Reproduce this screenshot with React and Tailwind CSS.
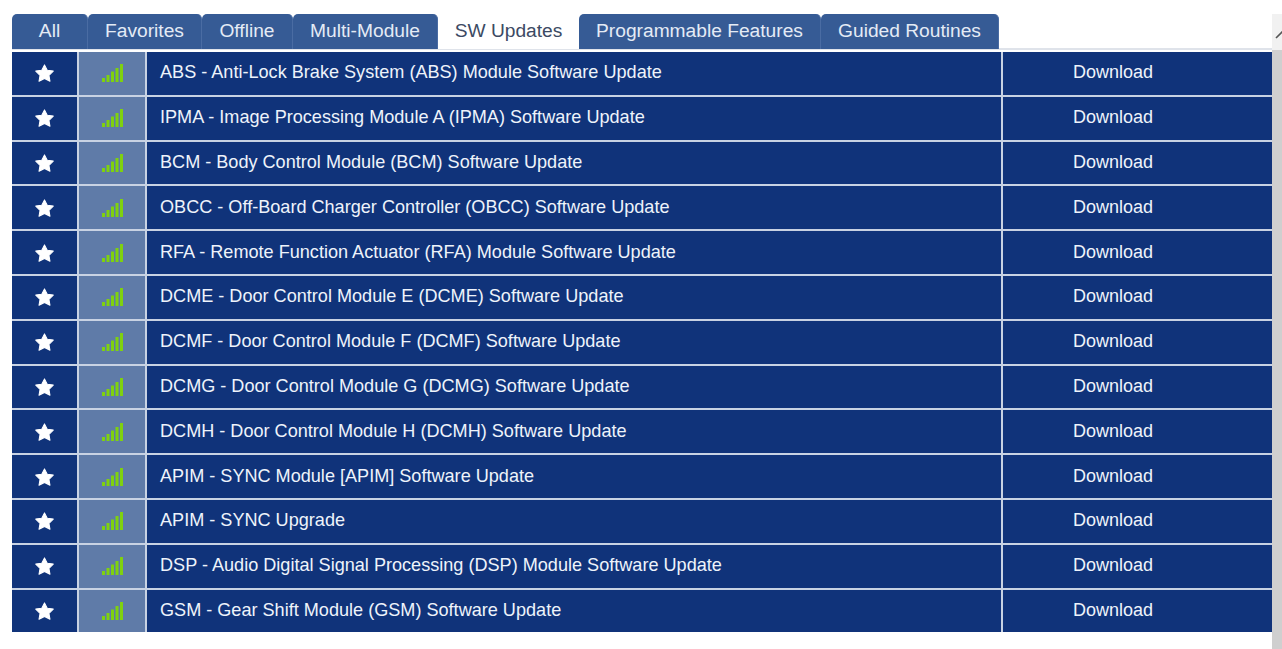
import React from 'react';

const tabs = [
  { label: 'All', width: 'w-[76px]' },
  { label: 'Favorites', width: 'w-[114px]' },
  { label: 'Offline', width: 'w-[91px]' },
  { label: 'Multi-Module', width: 'w-[145px]' },
  { label: 'SW Updates', width: 'w-[141px]', active: true },
  { label: 'Programmable Features', width: 'w-[242px]' },
  { label: 'Guided Routines', width: 'w-[178px]' },
];

const modules = [
  'ABS - Anti-Lock Brake System (ABS) Module Software Update',
  'IPMA - Image Processing Module A (IPMA) Software Update',
  'BCM - Body Control Module (BCM) Software Update',
  'OBCC - Off-Board Charger Controller (OBCC) Software Update',
  'RFA - Remote Function Actuator (RFA) Module Software Update',
  'DCME - Door Control Module E (DCME) Software Update',
  'DCMF - Door Control Module F (DCMF) Software Update',
  'DCMG - Door Control Module G (DCMG) Software Update',
  'DCMH - Door Control Module H (DCMH) Software Update',
  'APIM - SYNC Module [APIM] Software Update',
  'APIM - SYNC Upgrade',
  'DSP - Audio Digital Signal Processing (DSP) Module Software Update',
  'GSM - Gear Shift Module (GSM) Software Update',
];

const Star = () => (
  <svg width="19" height="18" viewBox="0 0 18 17" fill="#fff">
    <path d="M9 .8l2.6 5 5.7.9-4.1 4 1 5.6L9 13.7l-5.2 2.6 1-5.6-4.1-4 5.7-.9z" stroke="#fff" strokeWidth="1" strokeLinejoin="round" />
  </svg>
);

const Signal = () => (
  <svg width="21" height="18" viewBox="0 0 21 18" fill="#7fd10f">
    <rect x="0" y="14" width="3" height="4" />
    <rect x="4.5" y="11" width="3" height="7" />
    <rect x="9" y="7.5" width="3" height="10.5" />
    <rect x="13.5" y="4" width="3" height="14" />
    <rect x="18" y="0" width="3" height="18" />
  </svg>
);

const Row = ({ name }) => (
  <div className="flex h-[42.8px] gap-[2px]">
    <div className="flex w-[65px] items-center justify-center bg-[#10337a]"><Star /></div>
    <div className="flex w-[66px] items-center justify-center bg-[#5f7ba8]"><Signal /></div>
    <div className="flex w-[854px] items-center bg-[#10337a] pb-[2px] pl-[13px] text-[#eef3fb]">{name}</div>
    <div className="flex flex-1 items-center justify-center bg-[#10337a] pb-[2px] pr-[49px] text-[18px] text-[#eef3fb]">Download</div>
  </div>
);

export default function App() {
  return (
    <div className="flex h-[649px] w-[1282px] overflow-hidden bg-white font-['Liberation_Sans',Arial,sans-serif] text-[18.1px] leading-none">
      <div className="flex w-[1272px] flex-col pl-[12px] pt-[14px]">
        <div className="flex h-[36px] border-b-2 border-[#dfe3ea]">
          {tabs.map((tab) => (
            <div
              key={tab.label}
              className={`flex h-[35px] ${tab.width} items-center justify-center rounded-t-[5px] pb-[2px] text-[19.2px] ${
                tab.active ? 'bg-white text-[#3c4a63]' : 'border-r border-[#4a6ca3] bg-[#365b95] text-[#e4ebf5]'
              }`}
            >
              {tab.label}
            </div>
          ))}
        </div>
        <div className="mt-[2px] flex flex-col gap-[2px] bg-[#c8d2e3]">
          {modules.map((name) => (
            <Row key={name} name={name} />
          ))}
        </div>
      </div>
      <div className="mt-[14px] flex w-[10px] flex-col overflow-hidden bg-[#cfcfcf]">
        <div className="flex h-[36px] items-center justify-start bg-[#f1f1f1] pl-[3px] pt-[6px]">
          <svg width="14" height="8" viewBox="0 0 14 8" fill="none" stroke="#555" strokeWidth="1.6" className="shrink-0"><path d="M1 7l6-6 6 6" /></svg>
        </div>
      </div>
    </div>
  );
}
